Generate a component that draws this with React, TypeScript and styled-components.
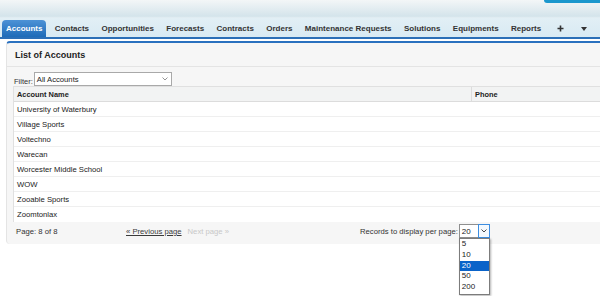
import React from "react";
import styled, { createGlobalStyle } from "styled-components";

const GlobalStyle = createGlobalStyle`
  html, body { margin: 0; padding: 0; background: #fff; overflow-x: hidden; }
  body { font-family: "Liberation Sans", Arial, sans-serif; color: #222; }
  * { box-sizing: border-box; }
`;

const Page = styled.div`
  width: 600px;
  height: 296px;
  position: relative;
`;

const Header = styled.div`
  height: 18px;
  background: linear-gradient(#f3f6f7, #d4e4eb 90%, #e4eff4);
  display: flex;
  justify-content: flex-end;
  align-items: flex-start;
`;

const TopButton = styled.div`
  width: 56px;
  height: 3px;
  background: #1b97cd;
  border-radius: 0 0 0 5px;
`;

const TabBar = styled.div`
  height: 21px;
  display: flex;
  align-items: flex-end;
  gap: 4.4px;
  padding: 0 0 0 2px;
  background: linear-gradient(#e2eff5, #d8eaf3);
  border-bottom: 2px solid #2b6fb7;
`;

const Tab = styled.div<{ $active?: boolean; $pad?: number }>`
  height: 17px;
  display: flex;
  align-items: center;
  padding: 0 ${(p) => p.$pad ?? 4}px;
  font-size: 8px;
  font-weight: bold;
  color: ${(p) => (p.$active ? "#fff" : "#333")};
  border-radius: 4px 4px 0 0;
  background: ${(p) =>
    p.$active ? "linear-gradient(#4d92d6, #1e6bb8)" : "transparent"};
  white-space: nowrap;
`;

const Content = styled.div`
  padding: 2px 0 0 6px;
`;

const Panel = styled.div`
  width: 640px;
  background: #f6f6f6;
  border-top: 2px solid #2a71bf;
  border-left: 1px solid #e4e4e4;
  border-radius: 4px 0 0 4px;
  padding: 0 0 0 6px;
`;

const PanelHeader = styled.div`
  height: 24px;
  display: flex;
  align-items: center;
  font-size: 9px;
  font-weight: bold;
  color: #222;
  border-bottom: 1px solid #e4e4e4;
  margin-left: -6px;
  padding: 1px 0 0 8px;
`;

const FilterRow = styled.div`
  display: flex;
  align-items: flex-end;
  padding: 5px 0 0 1px;
  font-size: 7.5px;
  color: #333;
`;

const FilterSelect = styled.div`
  width: 138px;
  height: 14px;
  margin-left: 1px;
  background: #fff;
  border: 1px solid #a9a9a9;
  display: flex;
  align-items: center;
  justify-content: space-between;
  padding: 0 3px 0 2px;
  font-size: 7.7px;
  color: #222;
`;

const Table = styled.div`
  background: #fff;
  border: 1px solid #e0e0e0;
  border-right: none;
  border-bottom: none;
`;

const HeadRow = styled.div`
  display: grid;
  grid-template-columns: 457px 1fr;
  height: 15px;
  background: #f2f3f3;
  border-bottom: 1px solid #dcdcdc;
`;

const HeadCell = styled.div<{ $sep?: boolean }>`
  display: flex;
  align-items: center;
  padding-left: 3px;
  font-size: 7.4px;
  font-weight: bold;
  color: #222;
  border-left: ${(p) => (p.$sep ? "1px solid #dcdcdc" : "none")};
`;

const Row = styled.div`
  height: 15px;
  display: flex;
  align-items: center;
  padding-left: 3px;
  font-size: 7.7px;
  color: #222;
  border-bottom: 1px solid #efefef;
  &:last-child { border-bottom: none; }
`;

const Footer = styled.div`
  display: flex;
  align-items: center;
  height: 22px;
  padding: 2px 0 6px 3px;
  font-size: 7.7px;
  color: #333;
`;

const PageInfo = styled.div`
  width: 110px;
`;

const Pager = styled.div`
  width: 234px;
  display: flex;
  gap: 6px;
`;

const PagerLink = styled.span<{ $disabled?: boolean }>`
  color: ${(p) => (p.$disabled ? "#c8c8c8" : "#3a3a3a")};
  text-decoration: ${(p) => (p.$disabled ? "none" : "underline")};
`;

const Records = styled.div`
  display: flex;
  align-items: center;
`;

const PerPage = styled.div`
  position: relative;
  width: 31px;
  height: 14px;
  display: flex;
  margin-left: 1px;
`;

const PerPageValue = styled.div`
  flex: 1;
  background: #fff;
  border: 1px solid #8f8f8f;
  border-right: none;
  padding-left: 2px;
  display: flex;
  align-items: center;
  font-size: 8px;
  color: #222;
`;

const PerPageButton = styled.div`
  width: 12px;
  border: 1px solid #3c8de0;
  background: #f4f9fe;
  display: flex;
  align-items: center;
  justify-content: center;
`;

const Dropdown = styled.div`
  position: absolute;
  top: 100%;
  left: 0;
  width: 31px;
  background: #fff;
  border: 1px solid #7c7c7c;
  box-shadow: 1px 1px 2px rgba(0, 0, 0, 0.3);
  padding: 0 0 1px;
  z-index: 2;
`;

const Option = styled.div<{ $selected?: boolean }>`
  height: 10.8px;
  line-height: 10.8px;
  padding-left: 2px;
  font-size: 8px;
  color: ${(p) => (p.$selected ? "#fff" : "#222")};
  background: ${(p) => (p.$selected ? "#0a63c9" : "transparent")};
`;

const Chevron = ({ color = "#555" }: { color?: string }) => (
  <svg width="6" height="4" viewBox="0 0 6 4">
    <path d="M0.5 0.5 L3 3 L5.5 0.5" fill="none" stroke={color} strokeWidth="0.9" />
  </svg>
);

const tabs = [
  "Accounts",
  "Contacts",
  "Opportunities",
  "Forecasts",
  "Contracts",
  "Orders",
  "Maintenance Requests",
  "Solutions",
  "Equipments",
  "Reports",
];

const accounts = [
  "University of Waterbury",
  "Village Sports",
  "Voltechno",
  "Warecan",
  "Worcester Middle School",
  "WOW",
  "Zooable Sports",
  "Zoomtonlax",
];

export default function App() {
  return (
    <>
      <GlobalStyle />
      <Page>
        <Header>
          <TopButton />
        </Header>
        <TabBar>
          {tabs.map((t, i) => (
            <Tab key={t} $active={i === 0}>
              {t}
            </Tab>
          ))}
          <Tab $pad={7}>
            <svg width="7" height="7" viewBox="0 0 7 7">
              <path d="M3.5 0.5 V6.5 M0.5 3.5 H6.5" stroke="#333" strokeWidth="1.6" />
            </svg>
          </Tab>
          <Tab $pad={6}>
            <svg width="6" height="4" viewBox="0 0 6 4">
              <path d="M0 0 H6 L3 4 Z" fill="#333" />
            </svg>
          </Tab>
        </TabBar>
        <Content>
          <Panel>
            <PanelHeader>List of Accounts</PanelHeader>
            <FilterRow>
              <span>Filter:</span>
              <FilterSelect>
                <span>All Accounts</span>
                <Chevron color="#888" />
              </FilterSelect>
            </FilterRow>
            <Table>
              <HeadRow>
                <HeadCell>Account Name</HeadCell>
                <HeadCell $sep>Phone</HeadCell>
              </HeadRow>
              {accounts.map((a) => (
                <Row key={a}>{a}</Row>
              ))}
            </Table>
            <Footer>
              <PageInfo>Page: 8 of 8</PageInfo>
              <Pager>
                <PagerLink>« Previous page</PagerLink>
                <PagerLink $disabled>Next page »</PagerLink>
              </Pager>
              <Records>
                <span>Records to display per page:</span>
                <PerPage>
                  <PerPageValue>20</PerPageValue>
                  <PerPageButton>
                    <Chevron color="#333" />
                  </PerPageButton>
                  <Dropdown>
                    {["5", "10", "20", "50", "200"].map((o) => (
                      <Option key={o} $selected={o === "20"}>
                        {o}
                      </Option>
                    ))}
                  </Dropdown>
                </PerPage>
              </Records>
            </Footer>
          </Panel>
        </Content>
      </Page>
    </>
  );
}
